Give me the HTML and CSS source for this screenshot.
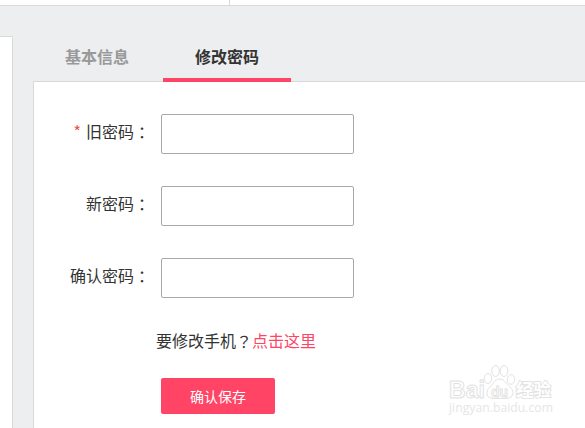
FILE: index.html
```
<!DOCTYPE html>
<html lang="zh-CN">
<head>
    <meta charset="UTF-8">
    <title>修改密码</title>
    <link rel="stylesheet" href="styles.css">
</head>
<body>
    <div class="header">
        <div class="header-left"></div>
    </div>
    <div class="container">
        <div class="sidebar"></div>
        <div class="main">
            <div class="tabs">
                <a class="tab">基本信息</a>
                <a class="tab active">修改密码</a>
            </div>
            <form class="panel">
                <div class="row">
                    <label for="old-pwd"><span class="required">*</span>旧密码<span class="mark" lang="zh-TW">：</span></label>
                    <input type="password" id="old-pwd" class="input">
                </div>
                <div class="row">
                    <label for="new-pwd">新密码<span class="mark" lang="zh-TW">：</span></label>
                    <input type="password" id="new-pwd" class="input">
                </div>
                <div class="row">
                    <label for="confirm-pwd">确认密码<span class="mark" lang="zh-TW">：</span></label>
                    <input type="password" id="confirm-pwd" class="input">
                </div>
                <p class="tip">要修改手机<span class="mark" lang="zh-TW">？</span><a class="link">点击这里</a></p>
                <button type="button" class="btn-save">确认保存</button>
            </form>
        </div>
    </div>
    <div class="watermark">
        <svg width="112" height="60" viewBox="0 0 112 60">
            <g class="outline">
                <text class="wm-logo" x="4" y="37.500" textLength="36" lengthAdjust="spacingAndGlyphs">Bai</text>
                <ellipse cx="43" cy="18.500" rx="3.700" ry="5"/>
                <ellipse cx="50.500" cy="11" rx="3.800" ry="5.500"/>
                <ellipse cx="59" cy="11" rx="3.800" ry="5.500"/>
                <ellipse cx="66" cy="19.500" rx="3.700" ry="4.800"/>
                <path d="M54.500 19C49.500 19 48.500 24 45 27C40 31 41 38.500 48 38.500H61C69 38.500 70 31 65 27C61 24 60 19 54.500 19Z"/>
                <text class="wm-du" x="46" y="36.500" textLength="17" lengthAdjust="spacingAndGlyphs">du</text>
                <text class="wm-cn" x="71" y="35.500">经验</text>
            </g>
            <text class="wm-url" x="4" y="51.500" textLength="104" lengthAdjust="spacingAndGlyphs">jingyan.baidu.com</text>
        </svg>
    </div>
</body>
</html>
```

FILE: styles.css
```
* {
    box-sizing: border-box;
}
body {
    margin: 0;
    height: 428px;
    overflow: hidden;
    display: flex;
    flex-direction: column;
    background-color: #edeef0;
    color: #333;
    font-family: "Noto Sans CJK SC", sans-serif;
    font-size: 16px;
}
.header {
    height: 6px;
    background-color: #fff;
    border-bottom: 1px solid #d9d9d9;
}
.header-left {
    width: 230px;
    height: 5px;
    border-right: 1px solid #d9d9d9;
}
.container {
    flex: 1;
    display: flex;
    gap: 20px;
    padding-top: 30px;
}
.sidebar {
    width: 13px;
    background-color: #fff;
    border: 1px solid #d9d9d9;
    border-width: 1px 1px 0 0;
    border-top-right-radius: 2px;
}
.main {
    flex: 1;
    display: flex;
    flex-direction: column;
}
.tabs {
    display: flex;
    gap: 2px;
    height: 46px;
    margin-bottom: -1px;
    z-index: 1;
}
.tab {
    width: 128px;
    line-height: 40px;
    text-align: center;
    font-weight: bold;
    color: #999;
}
.tab.active {
    color: #333;
    border-bottom: 4px solid #ff4466;
}
.panel {
    flex: 1;
    padding-top: 32px;
    background-color: #fff;
    border: 1px solid #d9d9d9;
    border-width: 1px 0 0 1px;
}
.row {
    display: flex;
    height: 40px;
    margin-bottom: 32px;
}
label {
    width: 116px;
    margin-right: 11px;
    line-height: 34px;
    text-align: right;
}
/* full-width punctuation centred in its box */
.mark {
    font-family: "Noto Sans CJK TC", sans-serif;
    line-height: 1;
    vertical-align: -1px;
}
.required {
    margin-right: 5px;
    color: #f0503c;
}
.input {
    width: 193px;
    height: 40px;
    padding: 0 8px;
    border: 1px solid #a9a9a9;
    border-radius: 2px;
    background-color: #fff;
}
.tip {
    height: 20px;
    margin: 0 0 28px 122px;
    line-height: 20px;
}
.link {
    color: #ff4466;
}
.btn-save {
    display: block;
    width: 114px;
    height: 36px;
    margin-left: 127px;
    padding: 0;
    border: none;
    border-radius: 2px;
    background-color: #ff4466;
    color: #fff;
    font-family: inherit;
    font-size: 14px;
    line-height: 36px;
}
.watermark {
    position: absolute;
    left: 445px;
    top: 360px;
    width: 112px;
    height: 60px;
}
.outline {
    fill: #fff;
    stroke: #e2e2e2;
    stroke-width: 1;
}
.wm-logo {
    font: bold 24px "Liberation Sans", sans-serif;
}
.wm-du {
    font: bold 15px "Liberation Sans", sans-serif;
}
.wm-cn {
    font: bold 17.5px "Noto Sans CJK SC", sans-serif;
    stroke-width: 1.8;
    paint-order: stroke;
}
.wm-url {
    font: 12px "Open Sans", sans-serif;
    fill: #e6e6e6;
}
```
